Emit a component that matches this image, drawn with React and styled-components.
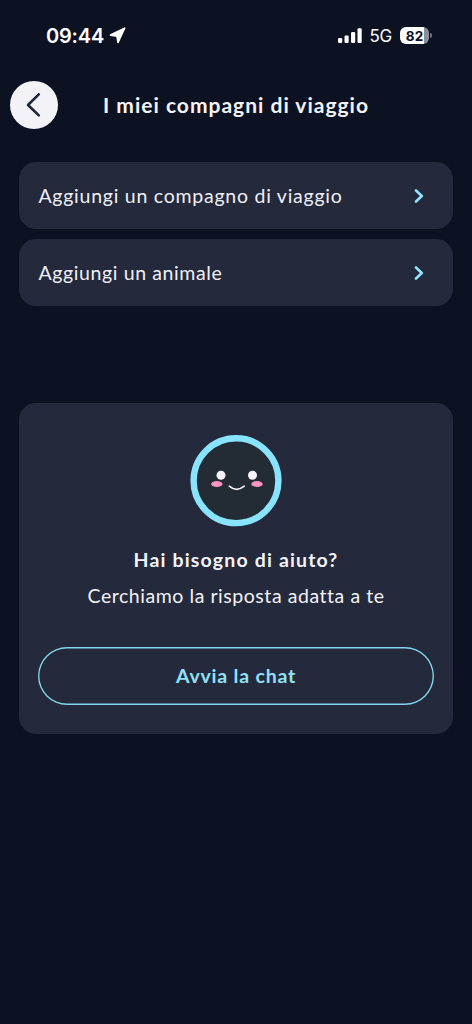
import React from 'react';
import styled, { createGlobalStyle } from 'styled-components';

const GlobalStyle = createGlobalStyle`
    * {
        box-sizing: border-box;
    }

    body {
        margin: 0;
        background-color: #0d1223;
    }
`;

const Screen = styled.div`
    width: 100%;
    min-height: 100vh;
    background-color: #0d1223;
    color: #f3f3f8;
    font-family: Lato, 'Open Sans', sans-serif;
`;

const StatusBar = styled.div`
    height: 71px;
    padding: 0 40px 0 46px;
    display: flex;
    justify-content: space-between;
    align-items: center;
    font-family: Inter, 'Liberation Sans', sans-serif;
    color: #ffffff;

    svg {
        display: block;
    }

    .time, .signals {
        display: flex;
        align-items: center;
    }

    .time {
        gap: 4.5px;
        font-size: 20px;
        font-weight: 600;
        letter-spacing: -0.2px;
    }

    .network {
        margin: 1px 8px 0 7px;
        font-size: 17px;
        font-weight: 400;
        letter-spacing: -0.2px;
    }
`;

const Battery = styled.div`
    width: 29px;
    height: 17px;
    border-radius: 6px;
    background: linear-gradient(to right, #ffffff 84%, #8b8d97 84%);
    display: flex;
    justify-content: center;
    align-items: center;
    color: #0d1223;
    font-size: 13.5px;
    font-weight: 700;
`;

const BatteryTip = styled.div`
    width: 2px;
    height: 5px;
    margin-left: 1px;
    border-radius: 0 2px 2px 0;
    background-color: #70737f;
`;

const Header = styled.header`
    height: 68px;
    padding: 0 10px;
    display: grid;
    grid-template-columns: 48px 1fr 48px;
    align-items: center;

    h1 {
        margin: 0 0 1px;
        font-size: 21px;
        font-weight: 700;
        letter-spacing: 1px;
        line-height: 28px;
        text-align: center;
        white-space: nowrap;
    }
`;

const BackButton = styled.button`
    width: 48px;
    height: 48px;
    padding: 0;
    border: none;
    border-radius: 50%;
    background-color: #f3f2f7;
    cursor: pointer;

    svg {
        display: block;
    }
`;

const Content = styled.main`
    padding: 23.4px 19.4px 0;
`;

const OptionList = styled.div`
    display: flex;
    flex-direction: column;
    gap: 10px;
`;

const Option = styled.button`
    width: 100%;
    height: 67px;
    padding: 0 28px 0 19px;
    border: none;
    border-radius: 17px;
    background-color: #24293c;
    display: flex;
    justify-content: space-between;
    align-items: center;
    color: #f0f0f7;
    font-family: inherit;
    font-size: 19.5px;
    letter-spacing: ${props => props.$spacing};
    line-height: 26px;
    text-align: left;
    cursor: pointer;
`;

const HelpCard = styled.section`
    height: 331px;
    margin-top: 96.6px;
    padding: 32px 19px 0;
    border-radius: 17px;
    background-color: #24293c;
    display: flex;
    flex-direction: column;
    align-items: center;

    h2 {
        margin: 19px 0 0;
        font-size: 19.5px;
        font-weight: 700;
        letter-spacing: 1.15px;
        line-height: 28px;
        white-space: nowrap;
    }

    p {
        margin: 8px 0 0;
        font-size: 19.5px;
        letter-spacing: 0.55px;
        line-height: 28px;
        white-space: nowrap;
    }
`;

const ChatButton = styled.button`
    width: 100%;
    height: 58px;
    margin-top: 37px;
    padding: 0 0 1px;
    border: none;
    border-radius: 29px;
    box-shadow: inset 0 0 0 1.4px #83d5ea;
    background-color: transparent;
    color: #91e2f8;
    font-family: inherit;
    font-size: 19.5px;
    font-weight: 700;
    letter-spacing: 0.8px;
    cursor: pointer;
`;

const LocationArrow = () => (
    <svg width="17" height="17" viewBox="0 0 17 17">
        <path d="M15.6 1.2 L9 15.3 L8 9.1 L1.5 8.1 Z" fill="#ffffff" stroke="#ffffff" strokeWidth="1.7" strokeLinejoin="round" />
    </svg>
);

const SignalBars = () => (
    <svg width="24" height="15" viewBox="0 0 24 15">
        <rect x="0" y="10" width="4.2" height="5" rx="1.2" fill="#ffffff" />
        <rect x="6.5" y="7.5" width="4.2" height="7.5" rx="1.2" fill="#ffffff" />
        <rect x="13" y="4" width="4.2" height="11" rx="1.2" fill="#ffffff" />
        <rect x="19.5" y="0.3" width="4.2" height="14.7" rx="1.2" fill="#ffffff" />
    </svg>
);

const BackIcon = () => (
    <svg width="48" height="48" viewBox="0 0 48 48">
        <path d="M28.8 13.4 L18 24 L28.8 34.4" fill="none" stroke="#20263a" strokeWidth="2.6" strokeLinecap="round" strokeLinejoin="round" />
    </svg>
);

const Chevron = () => (
    <svg width="11" height="14" viewBox="0 0 11 14">
        <path d="M2 1.5 L7.8 7 L2 12.5" fill="none" stroke="#8fe3fa" strokeWidth="2.6" strokeLinecap="round" strokeLinejoin="round" />
    </svg>
);

const ChatFace = () => (
    <svg width="92" height="92" viewBox="0 0 92 92">
        <circle cx="46" cy="45.7" r="42.4" fill="#232c34" stroke="#88e4fd" strokeWidth="6.4" />
        <circle cx="31" cy="40.2" r="4.5" fill="#f5f4fa" />
        <circle cx="62.5" cy="40.2" r="4.5" fill="#f5f4fa" />
        <ellipse cx="26.8" cy="49" rx="5.7" ry="3" fill="#fd94c5" />
        <ellipse cx="67" cy="49" rx="5.7" ry="3" fill="#fd94c5" />
        <path d="M39.2 51.2 Q46.6 57.6 54.2 51.2" fill="none" stroke="#f5f4fa" strokeWidth="1.6" strokeLinecap="round" />
    </svg>
);

const App = () => {
    return (
        <Screen>
            <GlobalStyle />
            <StatusBar>
                <div className='time'>
                    <span>09:44</span>
                    <LocationArrow />
                </div>
                <div className='signals'>
                    <SignalBars />
                    <span className='network'>5G</span>
                    <Battery>82</Battery>
                    <BatteryTip />
                </div>
            </StatusBar>
            <Header>
                <BackButton aria-label='Indietro'>
                    <BackIcon />
                </BackButton>
                <h1>I miei compagni di viaggio</h1>
            </Header>
            <Content>
                <OptionList>
                    <Option $spacing='0.75px'>
                        Aggiungi un compagno di viaggio
                        <Chevron />
                    </Option>
                    <Option $spacing='0.62px'>
                        Aggiungi un animale
                        <Chevron />
                    </Option>
                </OptionList>
                <HelpCard>
                    <ChatFace />
                    <h2>Hai bisogno di aiuto?</h2>
                    <p>Cerchiamo la risposta adatta a te</p>
                    <ChatButton>Avvia la chat</ChatButton>
                </HelpCard>
            </Content>
        </Screen>
    );
};

export default App;
